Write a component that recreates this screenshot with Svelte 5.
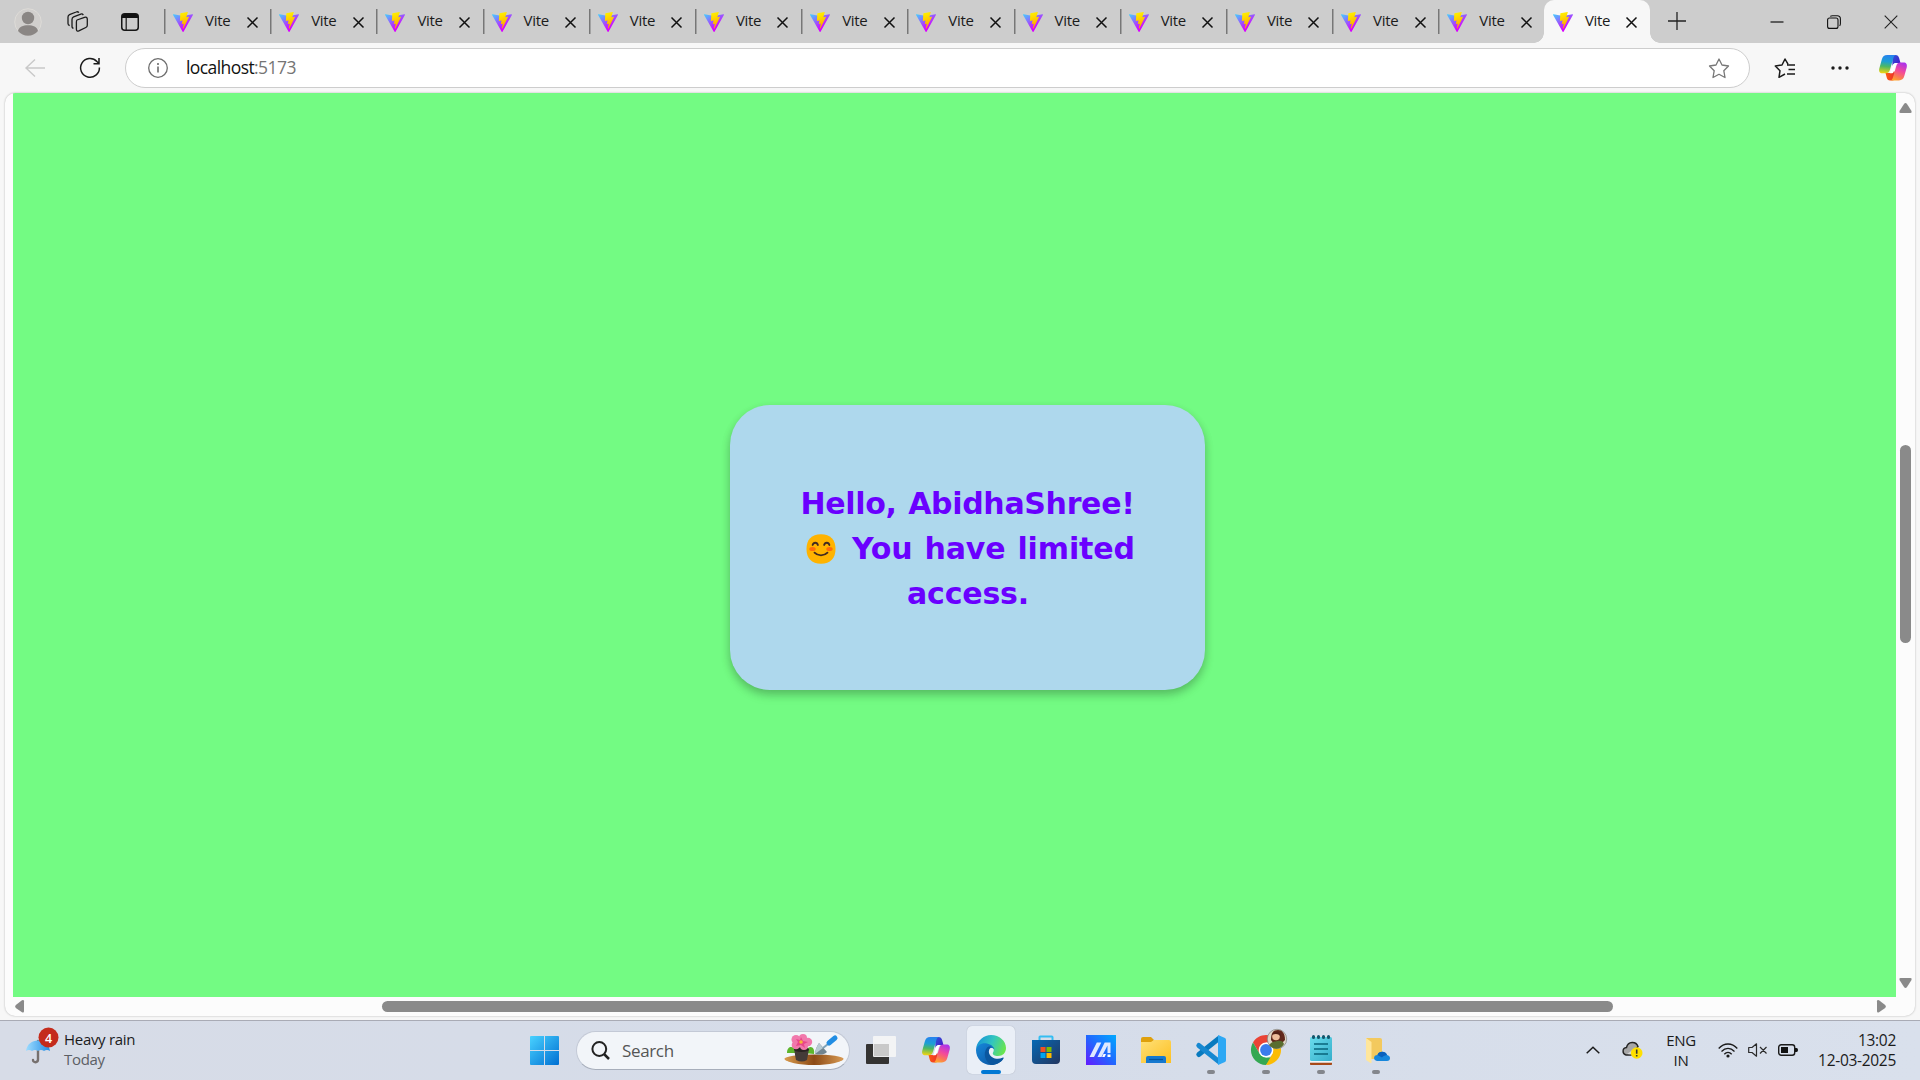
<script>
  const tabs = Array.from({ length: 14 }, (_, i) => ({ id: i, title: 'Vite', active: i === 13 }));
</script>

{#snippet vite()}
  <svg class="favicon" viewBox="0 0 256 257" width="20" height="20">
    <path fill="url(#viteBody)" d="M255.153 37.938L134.897 252.976c-2.483 4.44-8.862 4.466-11.382.048L.875 37.958c-2.746-4.814 1.371-10.646 6.827-9.67l120.385 21.517a6.537 6.537 0 0 0 2.322-.004l117.867-21.483c5.438-.991 9.574 4.796 6.877 9.62Z" />
    <path fill="url(#viteBolt)" d="M185.432.063L96.44 17.501a3.268 3.268 0 0 0-2.634 3.014l-5.474 92.456a3.268 3.268 0 0 0 3.997 3.378l24.777-5.718c2.318-.535 4.413 1.507 3.936 3.838l-7.361 36.047c-.495 2.426 1.782 4.5 4.151 3.78l15.304-4.649c2.372-.72 4.652 1.36 4.15 3.788l-11.698 56.621c-.732 3.542 3.979 5.473 5.943 2.437l1.313-2.028l72.516-144.72c1.215-2.423-.88-5.186-3.54-4.672l-25.505 4.922c-2.396.462-4.435-1.77-3.759-4.114l16.646-57.705c.677-2.35-1.37-4.583-3.769-4.113Z" />
  </svg>
{/snippet}

{#snippet copilot()}
  <svg width="28" height="26" viewBox="0 0 28 26">
    <path fill="url(#cpDark)" d="M13 0h3.500c2 0 3 1.200 3.600 3l1.400 5h-4c-2 0-3.300 1-4 3z" />
    <path fill="url(#cpRed)" d="M6.500 18h6.800l1-4 3 7c-.8 3-2 4.500-4.200 4.500h-2c-2 0-2.900-1.200-3.400-3z" />
    <path fill="url(#cpLeft)" d="M8.200 0H17c-1.500.3-2.200 1.500-2.700 3.300l-3.200 11c-.9 3-2.200 4-4.500 4H3.500C.6 18.300-.4 16.200.3 13.400l2.500-9C3.600 1.500 5.400 0 8.200 0z" />
    <path fill="url(#cpRight)" d="M20 25.500h-8.800c1.500-.3 2.300-1.500 2.800-3.300l3.200-11c.9-3 2.100-3.700 4.300-3.700h3c2.900 0 3.900 2.100 3.200 4.900l-2.400 8.700c-.8 2.900-2.500 4.400-5.300 4.400z" />
    <path fill="#fff" d="M15.600 8.300c-1.300.6-1.900 1.700-2.300 3.200l-1.400 4.700c-.3 1-.6 1.600-1.200 2.100h1.600c1.500 0 2.300-1 2.700-2.400l1.500-5c.4-1.300.9-2.200 1.800-2.700-.9-.2-1.800-.2-2.700.1z" />
  </svg>
{/snippet}

<svg class="defs" width="0" height="0" aria-hidden="true">
  <defs>
    <linearGradient id="viteBody" x1="0" x2=".58" y1="0" y2=".8"><stop offset="0" stop-color="#41d1ff" /><stop offset="1" stop-color="#d800ff" /></linearGradient>
    <linearGradient id="viteBolt" x1=".4" x2=".55" y1="0" y2=".85"><stop offset="0" stop-color="#fff000" /><stop offset=".3" stop-color="#ffdd00" /><stop offset="1" stop-color="#ffa800" /></linearGradient>
    <linearGradient id="cpDark" x1="0" x2="1" y1="0" y2="1"><stop offset="0" stop-color="#2b5ad8" /><stop offset="1" stop-color="#4a10c8" /></linearGradient>
    <linearGradient id="cpRed" x1="0" x2="1"><stop offset="0" stop-color="#ff5a10" /><stop offset="1" stop-color="#e52a30" /></linearGradient>
    <linearGradient id="cpLeft" x1=".4" x2=".3" y1="0" y2="1"><stop offset="0" stop-color="#2782ee" /><stop offset=".35" stop-color="#1c9fd5" /><stop offset=".62" stop-color="#4cb865" /><stop offset="1" stop-color="#f3d411" /></linearGradient>
    <linearGradient id="cpRight" x1=".7" x2=".3" y1="0" y2="1"><stop offset="0" stop-color="#ad32ea" /><stop offset=".45" stop-color="#f34a9b" /><stop offset=".75" stop-color="#fa7857" /><stop offset="1" stop-color="#ffa62b" /></linearGradient>
    <linearGradient id="win" x1="0" x2="1" y1="0" y2="1"><stop offset="0" stop-color="#49d2ff" /><stop offset="1" stop-color="#006fd2" /></linearGradient>
    <linearGradient id="edgeTop" x1="0" x2="1" y1=".3" y2=".6"><stop offset="0" stop-color="#1794d8" /><stop offset=".5" stop-color="#32c5c0" /><stop offset="1" stop-color="#6be64b" /></linearGradient>
    <linearGradient id="edgeLow" x1="0" x2="1" y1="0" y2="1"><stop offset="0" stop-color="#1687d9" /><stop offset="1" stop-color="#0b4f9c" /></linearGradient>
    <linearGradient id="store" x1="0" x2="1" y1="0" y2="1"><stop offset="0" stop-color="#0669b5" /><stop offset="1" stop-color="#23365f" /></linearGradient>
    <linearGradient id="asus" x1="0" x2="1" y1="1" y2="0"><stop offset="0" stop-color="#6519ff" /><stop offset=".5" stop-color="#2168ff" /><stop offset="1" stop-color="#00aaff" /></linearGradient>
    <linearGradient id="folder" x1="0" x2="1" y1="0" y2="1"><stop offset="0" stop-color="#ffe078" /><stop offset="1" stop-color="#fdc021" /></linearGradient>
    <linearGradient id="brella" x1="0" x2="1"><stop offset="0" stop-color="#9ddcff" /><stop offset="1" stop-color="#258de5" /></linearGradient>
    <linearGradient id="soil" x1="0" x2="1"><stop offset="0" stop-color="#d99b4e" /><stop offset=".5" stop-color="#8c4a16" /><stop offset="1" stop-color="#d89b54" /></linearGradient>
    <linearGradient id="note" x1="0" x2="1" y1="0" y2="1"><stop offset="0" stop-color="#6bdcec" /><stop offset="1" stop-color="#35aecb" /></linearGradient>
  </defs>
</svg>

<div class="screen">
  <div class="browser">
    <header class="tabstrip">
      <div class="tools">
        <svg width="28" height="28" viewBox="0 0 28 28"><circle cx="14" cy="14" r="13.300" fill="#d1cfcd" stroke="#dedcd8" /><circle cx="14" cy="10" r="6.200" fill="#8a8684" /><path fill="#8a8684" d="M4 23c1-4.300 5-5.800 10-5.800S23 18.700 24 23a13 13 0 0 1-20 0z" /></svg>
        <svg class="workspaces" width="22" height="22" viewBox="0 0 22 22" fill="none" stroke="#1b1b1b" stroke-width="1.300"><path d="m10 9 7.500-2.700c1.500-.5 2.800.2 2.800 1.800v6.200c0 1.200-.5 1.800-1.500 2.200l-7 3.400c-1.400.6-2.400 0-2.400-1.600v-7c0-1.200 0-2 .6-2.300zM6.500 17.200c-1.200 0-1.500-.8-1.500-2V8.400c0-1.300.5-2 1.600-2.500l7.200-2.800c1.200-.4 2 .1 2.500 1M2.700 14.500C1.500 14.200 1 13.600 1 12.400V6c0-1.300.4-1.900 1.500-2.400L9.200 1c1.200-.5 2-.2 2.700.7" /></svg>
        <svg class="vertical" width="18" height="18" viewBox="0 0 18 18"><rect x=".75" y=".75" width="16.500" height="16.500" rx="3" fill="none" stroke="#161616" stroke-width="1.500" /><path fill="#111" d="M1 5V3.500C1 2 2 1 3.500 1h11C16 1 17 2 17 3.500V5z" /><path stroke="#222" stroke-width="1.300" d="M5.200 5v12" /></svg>
      </div>
      {#each tabs as tab (tab.id)}
        <div class="tab" class:active={tab.active}>
          {@render vite()}
          <span class="title">{tab.title}</span>
          <svg width="11" height="11" viewBox="0 0 11 11"><path stroke="#111" stroke-width="1.500" d="m.5.500 10 10m0-10-10 10" /></svg>
        </div>
      {/each}
      <svg class="plus" width="18" height="18" viewBox="0 0 18 18"><path stroke="#222" stroke-width="1.300" d="M9 0v18M0 9h18" /></svg>
      <div class="controls">
        <svg width="14" height="14" viewBox="0 0 14 14"><path stroke="#111" stroke-width="1.200" d="M.5 7h13" /></svg>
        <svg width="14" height="14" viewBox="0 0 14 14" fill="none" stroke="#111" stroke-width="1.100"><rect x=".6" y="3" width="10.400" height="10.400" rx="2" /><path d="M3.200 1.400C4 .8 4.500.7 5.500.7h4.700c2 0 3.200 1.200 3.200 3.200v4.500c0 1-.2 1.800-.8 2.500" /></svg>
        <svg width="14" height="14" viewBox="0 0 14 14"><path stroke="#222" stroke-width="1.100" d="m.7.700 12.600 12.600m0-12.600L.7 13.300" /></svg>
      </div>
    </header>

    <div class="toolbar">
      <svg class="back" width="20" height="18" viewBox="0 0 20 18" fill="none" stroke="#c9c9c9" stroke-width="1.400"><path d="M20 9H1m9-8.500L1 9l9 8.500" /></svg>
      <svg class="reload" width="22" height="22" viewBox="0 0 22 22" fill="none" stroke="#1a1a1a" stroke-width="1.500"><path d="M20.400 10.500a9.400 9.400 0 1 1-2.500-6l2 2M20 1v5.700h-5.500" /></svg>
      <div class="address">
        <svg width="20" height="20" viewBox="0 0 20 20"><circle cx="10" cy="10" r="9.300" fill="none" stroke="#6d6d6d" stroke-width="1.300" /><path stroke="#6d6d6d" stroke-width="1.600" d="M10 8.500v6M10 5v2" /></svg>
        <span class="url"><b>localhost</b>:5173</span>
        <svg class="star" width="22" height="21" viewBox="0 0 22 21"><path fill="none" stroke="#777" stroke-width="1.300" stroke-linejoin="round" d="m11 1 3 6 6.500 1-4.700 4.700L17 19.500l-6-3.200-6 3.200 1.200-6.800L1.500 8 8 7z" /></svg>
      </div>
      <svg class="favs" width="22" height="21" viewBox="0 0 22 21" fill="none" stroke="#1b1b1b" stroke-width="1.500" stroke-linejoin="round"><path d="m11 16-6 3.300 1-6.600L1.300 8 8 7l3-6 3 5.200M13 7h8M14.500 11.500H21M13 16h8" /></svg>
      <svg class="more" width="18" height="4" viewBox="0 0 18 4" fill="#1b1b1b"><circle cx="2" cy="2" r="1.700" /><circle cx="9" cy="2" r="1.700" /><circle cx="16" cy="2" r="1.700" /></svg>
      {@render copilot()}
    </div>

    <div class="panel">
      <main class="page">
        <section class="card">
          <h1>
            <span class="l1">Hello, AbidhaShree!</span>
            <span class="l2">
              <svg width="30" height="30" viewBox="0 0 30 30" role="img" aria-label="smiling face"><path fill="#ffb300" d="M15 .3c9.500 0 14.500 5.500 14.500 14.700S24.500 29.700 15 29.700.5 24.200.5 15 5.500.3 15 .3z" /><ellipse cx="6.500" cy="15" rx="3.200" ry="2.100" fill="#ff6d0a" /><ellipse cx="23.500" cy="15" rx="3.200" ry="2.100" fill="#ff6d0a" /><path fill="none" stroke="#422b20" stroke-width="1.800" stroke-linecap="round" d="M6.600 11c.8-3 4.600-3 5.300 0m6.200 0c.8-3 4.600-3 5.300 0M8.500 18.700c3.300 3.500 9.700 3.500 13 0" /></svg>
              <span>You have limited</span>
            </span>
            <span class="l3">access.</span>
          </h1>
        </section>
      </main>
      <div class="vbar">
        <svg width="13" height="10" viewBox="0 0 13 10"><path fill="#8a8a8a" d="M5 1q1.500-1.800 3 0l4.500 7q.7 2-1 2h-10q-1.700 0-1-2z" /></svg>
        <i></i>
        <svg width="13" height="10" viewBox="0 0 13 10"><path fill="#8a8a8a" d="M5 9q1.500 1.800 3 0l4.500-7q.7-2-1-2h-10q-1.700 0-1 2z" /></svg>
      </div>
      <div class="hbar">
        <svg width="9" height="13" viewBox="0 0 9 13"><path fill="#8a8a8a" d="M.8 5q-1.500 1.500 0 3L7 12.300q2 .7 2-1v-10q0-1.700-2-1z" /></svg>
        <i></i>
        <svg width="9" height="13" viewBox="0 0 9 13"><path fill="#8a8a8a" d="M8.200 5q1.500 1.500 0 3L2 12.300q-2 .7-2-1v-10Q0-.4 2 .3z" /></svg>
      </div>
    </div>
  </div>

  <footer class="taskbar">
    <div class="weather">
      <svg width="34" height="38" viewBox="0 0 34 38"><path fill="none" stroke="#77716f" stroke-width="2.400" stroke-linecap="round" d="M13 14v18.500c0 3.500-5 3.500-5 .5" /><path fill="url(#brella)" d="M1 24C2 17 7 13.500 13 13.500S24 17 25 24c-2-1.300-4-1.300-6 0-2-1.300-4-1.300-6 0-2-1.300-4-1.300-6 0-2-1.300-4-1.300-6 0z" /><circle cx="23.500" cy="10.500" r="10" fill="#c42b1c" /><text x="23.500" y="15.500" text-anchor="middle" class="badge">4</text></svg>
      <div class="lines"><span class="heavy">Heavy rain</span><span class="today">Today</span></div>
    </div>

    <svg class="start" width="29" height="29" viewBox="0 0 29 29"><path fill="url(#win)" d="M1 0h13v14H0V1q0-1 1-1zM15 0h13q1 0 1 1v13H15zM0 15h14v14H1q-1 0-1-1zM15 15h14v13q0 1-1 1H15z" /></svg>
    <div class="search">
      <svg width="19" height="19" viewBox="0 0 19 19" fill="none" stroke="#222" stroke-width="2"><circle cx="8.300" cy="8" r="6.900" /><path stroke-width="2.500" d="m13 13 5 5" /></svg>
      <span>Search</span>
      <svg class="plant" width="60" height="32" viewBox="0 0 60 32"><ellipse cx="30" cy="25" rx="29.500" ry="4.500" fill="url(#soil)" /><path fill="url(#soil)" d="M.5 24.500h59c-2 4-14 6.500-29.500 6.500S2.500 28.500.5 24.500z" /><path fill="#5db52c" d="M3 19c0-6 4-7 7-5l4 5zM30 20c1-5-2-9-6-6l-4 5z" /><path fill="#443b38" d="M10 15h15l-2 11q-5 3-11 0z" /><ellipse cx="17.500" cy="15.500" rx="7.500" ry="2.500" fill="#292321" /><g fill="#f178ac"><circle cx="12" cy="5.500" r="4.500" /><circle cx="19" cy="4" r="4" /><circle cx="24" cy="8" r="4.200" /><circle cx="12" cy="11" r="4.300" /><circle cx="20" cy="12" r="4" /></g><path fill="#e9468a" d="m17 3 2 4 5 1-4 2 1 4-4-3-5 1 2-4-2-3 4 1z" /><circle cx="17" cy="8" r="1.800" fill="#f8b53a" /><path stroke="#7fa3b9" stroke-width="2" d="m39 14 5-4" /><path fill="#718591" d="m35 9 8 9c-3 3-7 3-12 2 0-4 2-8 4-11z" /><path fill="#b8cbd4" d="m35 9 4 5-8 6c0-4 2-8 4-11z" /><path stroke="#218de3" stroke-width="5" stroke-linecap="round" d="m45 9 6-5" /></svg>
    </div>

    <nav class="apps">
      <div class="app"><svg width="30" height="30" viewBox="0 0 30 30"><rect y="9" width="23" height="20" rx="1" fill="#343332" /><rect x="7" y="1" width="23" height="21" rx="1" fill="#f4f4f5" opacity=".95" /><path fill="#c9c9c9" d="M8 9h15v12H8z" /></svg></div>
      <div class="app">{@render copilot()}</div>
      <div class="app current"><svg width="30" height="30" viewBox="0 0 30 30"><path fill="url(#edgeTop)" d="M.3 12C2 5 8 0 15 0c8.500 0 15 6 15 13 0 5-3.500 8-8 8-3.500 0-6-1.500-5-3.500 1.500-2 1-6.500-4-7.300C7 9.500 2 12 .3 16z" /><path fill="url(#edgeLow)" d="M0 15C1 10 6 7.500 11 8.500c4 .8 7 3.500 7.500 6C13 9.500 9 18 13 23c3.500 4 10 4.500 14.500.5C25 27.500 20 30 15 30 6.500 30 0 23.500 0 15z" /><path fill="#0b579f" d="M10.500 13.500C7 19 9 26 15 30c5 0 10-2.500 12.500-6.500.5-1-.3-1.200-1-.8-5 2.500-12 .5-13.500-4.700-.5-2 .3-4.500 2-6.300-2-.4-3.500.2-4.500 1.800z" /></svg><i></i></div>
      <div class="app"><svg width="30" height="30" viewBox="0 0 30 30"><path fill="none" stroke="#35bdf2" stroke-width="2" d="M8.500 6V2.200q0-.7.700-.7h11.600q.7 0 .7.700V6" /><path fill="url(#store)" d="M1 5h28v20q0 4-4 4H5q-4 0-4-4z" /><path fill="#f25022" d="M9.500 12h5v5h-5z" /><path fill="#7fba00" d="M15.500 12h5v5h-5z" /><path fill="#00a4ef" d="M9.500 18h5v5h-5z" /><path fill="#ffb900" d="M15.500 18h5v5h-5z" /></svg></div>
      <div class="app"><svg width="30" height="30" viewBox="0 0 30 30"><path fill="url(#asus)" d="M0 0h30v30H0z" /><path fill="#dfe9ff" d="M10.800 7.500h4.500L8 22H3.500zM18.700 7.500H24.500V18h-3v-7.500L15.500 22h-4z" /><path fill="#fff" d="M17.500 19h2.500l-1.400 3h-2.500zM21.500 19.500H24.500V22h-3z" /></svg></div>
      <div class="app"><svg width="30" height="30" viewBox="0 0 30 30"><path fill="#dfa00c" d="M0 4q0-2 2-2h8l3 3-3 4H0z" /><path fill="url(#folder)" d="M0 7h10l3-2h15q2 0 2 2v21H0z" /><path fill="#1679cf" d="M5 28v-5q0-2 2-2h16q2 0 2 2v5z" /><path stroke="#07549d" stroke-width="1.200" d="M8 24.500h14" /></svg></div>
      <div class="app"><svg width="30" height="30" viewBox="0 0 30 30"><path fill="none" stroke="#087abf" stroke-width="5" stroke-linejoin="round" stroke-linecap="round" d="m2.800 19.500 20-16" /><path fill="none" stroke="#1688d1" stroke-width="5" stroke-linecap="round" d="m2.800 10.500 20 16" /><path fill="#2da8f4" d="m22 0 7 3q1 .5 1 2v20q0 1.500-1 2l-7 3z" /></svg><i></i></div>
      <div class="app"><svg class="chrome" width="38" height="38" viewBox="0 0 38 38"><path fill="#ea4335" d="M15 8c5.200 0 10.400 2.700 13 7.500H15l-6.500 11-6.500-11C4.600 10.700 9.800 8 15 8z" /><path fill="#34a853" d="m2 15.500 6.500 11 6.500 4h6.500L15 38C4 38-4 26 2 15.500z" /><path fill="#fbbc04" d="M28 15.500C34 26 26 38 15 38l6.500-11.200L21 15.500z" /><circle cx="15" cy="23" r="7.400" fill="#fff" /><circle cx="15" cy="23" r="5.900" fill="#3b7ced" /><circle cx="26" cy="12" r="9.700" fill="#ded7c7" stroke="#8a8985" stroke-width=".8" /><path fill="#61281c" d="M20 13c0-7 2-10 7-10 4 0 7 3 7 10l-4 4h-7z" /><circle cx="25" cy="9.500" r="3.800" fill="#efbd9b" /><path fill="#596d30" d="M18 18c3-4 6-3 8-4 4-1 6 0 7 3-3 6-11 6-15 1z" /><path fill="#542217" d="M21 8c1-4 9-5 9 2-2-3-5-4-9-2z" /></svg><i></i></div>
      <div class="app"><svg width="30" height="30" viewBox="0 0 30 30"><path fill="#a74a18" d="M4 27.500h22v1.700q0 .8-.8.800H4.800q-.8 0-.8-.8z" /><path fill="#f5f5f5" d="M4 25h22v2.500H4z" /><rect x="4" y="2" width="22" height="24" rx="1.500" fill="url(#note)" /><path stroke="#09647b" stroke-width="1.700" d="M8 9h14M8 14h14M8 19h14" /><path stroke="#13566c" stroke-width="3" stroke-linecap="round" d="M7.500 1.500v1m5-1v1m5-1v1m5-1v1" /></svg><i></i></div>
      <div class="app"><svg width="30" height="30" viewBox="0 0 30 30"><path fill="#f3c95e" d="M5 3h14q2 0 2 2v19H10z" /><path fill="#ffe69b" d="m5 3 5.500 4v20.500q0 1-1 .5L5 25z" /><path fill="#1687dc" d="M16 26c-4-.5-4-6 .5-6 1-4 8-4.500 9.500 0 4 .5 4 6 0 6z" /><path fill="#0a61bd" d="M16.500 20c1-4 8-4.500 9.500 0-3 .5-4 1.500-5 2.500z" /></svg><i></i></div>
    </nav>

    <div class="tray">
      <svg class="chev" width="14" height="8" viewBox="0 0 14 8"><path fill="none" stroke="#1b1b1b" stroke-width="1.500" d="m.7 7.300 6.300-6 6.300 6" /></svg>
      <svg class="cloud" width="21" height="18" viewBox="0 0 21 18"><path fill="#a7a7a7" stroke="#252525" stroke-width="1.400" d="M4 14C0 13 0 7 4.500 6.500 6 0 14 0 16 5.500L9 14z" /><path fill="#d6d6d6" d="m5 13 7-5 5 1-3 5z" /><circle cx="14.700" cy="12" r="5.800" fill="#ffe000" /><path stroke="#343434" stroke-width="1.600" d="M14.700 8.500v4.300m0 1.200v1.500" /></svg>
      <div class="lang"><span>ENG</span><span>IN</span></div>
      <svg class="wifi" width="20" height="15" viewBox="0 0 20 15" fill="none" stroke="#1b1b1b" stroke-width="1.300"><path d="M.7 5.500c5.300-6 13.300-6 18.600 0M3.500 8.500c4-4.300 9-4.300 13 0M6.300 11.300c2.300-2.500 5.100-2.500 7.400 0" /><circle cx="10" cy="13" r="1.600" fill="#1b1b1b" stroke="none" /></svg>
      <svg class="sound" width="20" height="14" viewBox="0 0 20 14" fill="none" stroke="#2b2b2b" stroke-width="1.200"><path stroke-linejoin="round" d="M.7 4.500H4L8.500.8v12.400L4 9.500H.7zM12 4l6.500 6.500m0-6.500L12 10.500" /></svg>
      <svg class="battery" width="20" height="12" viewBox="0 0 20 12"><rect x=".7" y=".7" width="16" height="10.600" rx="2.500" fill="none" stroke="#1b1b1b" stroke-width="1.400" /><path fill="#111" d="M3 3h7v6H3zM17 4h1.500q1.500 0 1.500 2t-1.500 2H17z" /></svg>
      <div class="clock"><span class="time">13:02</span><span class="date">12-03-2025</span></div>
    </div>
  </footer>
</div>

<style>
  :global(body) { margin: 0; overflow: hidden; }
  * { box-sizing: border-box; }
  svg { display: block; flex: none; overflow: visible; }
  .defs { position: absolute; }
  .screen { width: 1920px; height: 1080px; font-family: "Open Sans", "Noto Sans", sans-serif; color: #1b1b1b; }
  .browser { height: 1021px; background: #f7f7f7; border-bottom: 1px solid #a9abb5; }

  .tabstrip { display: flex; align-items: center; height: 43px; background: #cdcdcd; }
  .tools { display: flex; align-items: center; width: 164px; padding-left: 14px; flex: none; }
  .workspaces { margin-left: 25px; }
  .vertical { margin-left: 32px; }
  .tab { display: flex; align-items: center; width: 106.200px; height: 43px; padding-left: 9px; flex: none; background: linear-gradient(#777, #777) 0 9px / 1.500px 25px no-repeat; }
  .favicon { margin-top: 1px; }
  .title { width: 41.500px; margin-left: 12px; font-size: 15px; letter-spacing: -.3px; line-height: 20px; margin-top: -4px; }
  .tab > svg:last-child { margin-top: 1px; }
  .active { position: relative; width: 106px; padding-left: 8.500px; background: #f7f7f7; border-radius: 10px 10px 0 0; }
  .active::before, .active::after { content: ""; position: absolute; bottom: 0; width: 10px; height: 10px; }
  .active::before { left: -10px; background: radial-gradient(circle at 0 0, transparent 9.500px, #f7f7f7 10px); }
  .active::after { right: -10px; background: radial-gradient(circle at 100% 0, transparent 9.500px, #f7f7f7 10px); }
  .plus { margin-left: 17.500px; margin-top: -2px; }
  .controls { display: flex; gap: 43px; margin-left: auto; padding-right: 22px; }

  .toolbar { display: flex; align-items: center; height: 50px; padding-left: 25px; }
  .reload { margin-left: 34px; }
  .address { display: flex; align-items: center; width: 1625px; height: 40px; margin-left: 24px; padding: 0 19px 0 22px; background: #fff; border: 1px solid #cdcdcd; border-radius: 20px; }
  .url { margin-left: 18px; font-size: 17.500px; letter-spacing: -.58px; color: #757575; line-height: 24px; margin-top: -2px; }
  .url b { font-weight: 400; color: #111; }
  .star { margin-left: auto; }
  .favs { margin-left: 24px; }
  .more { margin: 0 30px 0 35px; }

  .panel { display: grid; grid-template: 904px 19px / 1883px 1fr; width: 1910px; height: 923px; margin-left: 5px; padding-left: 8px; border-radius: 10px; background: #fcfcfc; box-shadow: 0 0 2px #aaa; overflow: hidden; }
  .page { display: flex; justify-content: center; align-items: flex-start; padding: 312px 0 0 26px; background: #73fb83; }
  .card { width: 475px; height: 285px; padding-top: 76px; border-radius: 40px; background: #aed8ed; box-shadow: 0 4px 8px rgba(0, 0, 0, .2), 0 6px 12px rgba(0, 0, 0, .08); }
  h1 { display: flex; flex-direction: column; align-items: center; margin: 0; font: 700 30px/45px Verdana, "DejaVu Sans", sans-serif; color: #6a00ff; white-space: nowrap; }
  .l1 { letter-spacing: -.32px; word-spacing: 1.500px; }
  .l2 { display: flex; align-items: center; gap: 16px; padding-left: 6px; }
  .l2 span { letter-spacing: -.1px; word-spacing: 1.500px; }
  .l3 { padding-left: 1px; letter-spacing: -.2px; }
  .vbar { display: flex; flex-direction: column; align-items: center; padding-top: 10px; }
  .vbar i { width: 11px; height: 198px; margin: 332px 0 335px; border-radius: 6px; background: #8a8a8a; }
  .hbar { grid-column: 1 / 3; display: flex; align-items: center; padding-left: 2px; }
  .hbar i { width: 1231px; height: 11px; margin: 0 264px 0 358px; border-radius: 6px; background: #8a8a8a; }

  .taskbar { display: flex; align-items: center; height: 59px; padding-bottom: 1px; background: linear-gradient(90deg, #d7dce7, #d5dce9 50%, #d9e0ec); }
  .weather { display: flex; width: 530px; padding-left: 25px; align-self: flex-start; padding-top: 6px; }
  .badge { font-size: 12.500px; font-weight: 600; fill: #fff; }
  .lines, .lang, .clock { display: flex; flex-direction: column; line-height: 20px; font-size: 15px; }
  .lines { margin: 2px 0 0 5px; }
  .heavy { letter-spacing: -.3px; }
  .today { color: #5c5f64; letter-spacing: -.3px; }
  .search { display: flex; align-items: center; width: 274px; height: 39px; margin-left: 17px; padding: 0 5px 0 14px; border: 1px solid #c3c9d6; border-bottom-color: #a7aebb; border-radius: 20px; background: #f2f5f9; }
  .search span { margin-left: 12px; font-size: 17px; letter-spacing: -.35px; color: #555; }
  .plant { margin-left: auto; }
  .apps { display: flex; gap: 7px; margin-left: 7px; }
  .app { position: relative; display: flex; align-items: center; justify-content: center; width: 48px; height: 48px; border-radius: 5px; }
  .app i { position: absolute; left: 20px; bottom: 0; width: 8px; height: 4px; border-radius: 2px; background: #83868c; }
  .current { background: #eaeff7; box-shadow: 0 0 1px #9ba1af; }
  .current i { left: 14px; width: 20px; background: #0078d4; }
  .chrome { margin: -8px 0 0 8px; }
  .tray { display: flex; align-items: center; margin-left: 186px; }
  .cloud { margin-left: 22px; }
  .lang { width: 42px; margin-left: 17px; align-items: center; letter-spacing: -.3px; }
  .wifi { margin-left: 16px; }
  .sound { margin-left: 10px; }
  .battery { margin-left: 10px; }
  .clock { width: 80px; margin-left: 18px; align-items: flex-end; font-size: 15.500px; letter-spacing: -.3px; white-space: nowrap; }
</style>
